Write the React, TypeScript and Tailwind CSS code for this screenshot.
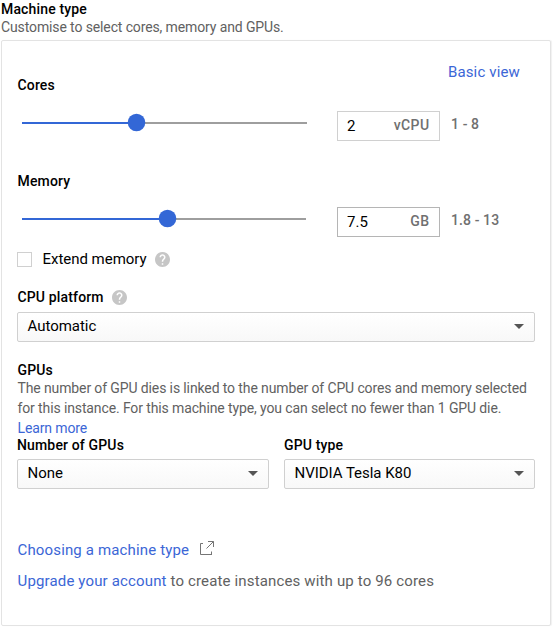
import type { ReactNode } from "react";

function Label({ children, className = "" }: { children: ReactNode; className?: string }) {
  return (
    <div className={`text-[14px] font-medium leading-5 tracking-[0.15px] whitespace-nowrap text-black ${className}`}>
      {children}
    </div>
  );
}

function Help() {
  return (
    <svg className="size-[15px] shrink-0" viewBox="2 2 20 20" fill="#c6c6c6">
      <path d="M12 2C6.48 2 2 6.48 2 12s4.48 10 10 10 10-4.48 10-10S17.52 2 12 2zm1 17h-2v-2h2v2zm2.07-7.75-.9.92C13.45 12.9 13 13.5 13 15h-2v-.5c0-1.1.45-2.1 1.17-2.83l1.24-1.26c.37-.36.59-.86.59-1.41 0-1.1-.9-2-2-2s-2 .9-2 2H8c0-2.21 1.79-4 4-4s4 1.79 4 4c0 .88-.36 1.68-.93 2.25z" />
    </svg>
  );
}

function Slider({ fill, width }: { fill: number; width: number }) {
  return (
    <div className="relative mt-[11px] ml-[5px] h-[2px] bg-[#9e9e9e]" style={{ width }}>
      <div className="h-full bg-[#3367d6]" style={{ width: fill }} />
      <svg className="absolute -top-[9px] size-5" style={{ left: fill - 10 }} viewBox="0 0 20 20" fill="#3367d6">
        <circle cx="10.5" cy="9.5" r="8.8" />
      </svg>
    </div>
  );
}

function Amount(props: { fill: number; width: number; value: string; unit: string; range: string; border: string }) {
  return (
    <div className="flex h-[30px]">
      <div className="w-[320px] shrink-0">
        <Slider fill={props.fill} width={props.width} />
      </div>
      <div className={`flex h-[30px] w-[103px] justify-between border pr-[9.5px] pl-[9px] ${props.border}`}>
        <span className="pt-[4px] text-[15px] leading-5 tracking-[0.1px] text-black">{props.value}</span>
        <span className="pt-[3px] text-[14px] font-medium leading-5 tracking-[0.4px] text-[#707070]">{props.unit}</span>
      </div>
      <span className="ml-[11px] pt-[3px] text-[14px] font-medium leading-5 tracking-[0.1px] text-[#707070]">
        {props.range}
      </span>
    </div>
  );
}

function Select({ value }: { value: string }) {
  return (
    <div className="flex h-[30px] items-center justify-between rounded-[2px] border border-[#d0d0d0] bg-linear-to-b from-white to-[#f8f8f8] pr-[10px] pl-[9.5px]">
      <span className="-mt-[2px] text-[15px] leading-5 tracking-[-0.03px] text-black">{value}</span>
      <svg className="-mt-px h-[5px] w-[10px]" viewBox="0 0 10 5" fill="#555">
        <path d="M0 0h10L5 5z" />
      </svg>
    </div>
  );
}

export default function App() {
  return (
    <div className="h-[633px] w-[553px] overflow-hidden bg-white font-['Roboto',sans-serif]">
      <div className="h-[40px] pl-px">
        <div className="-translate-y-px">
          <Label>Machine type</Label>
          <div className="-mt-[2px] text-[14px] leading-5 tracking-[-0.12px] text-[#616161]">
            Customise to select cores, memory and GPUs.
          </div>
        </div>
      </div>
      <div className="ml-px h-[586px] w-[550px] rounded-[2px] border border-[#e3e3e3] px-[15px] pt-[21px] shadow-[1px_0_1px_rgba(0,0,0,0.06)]">
        <div className="flex h-[33px] justify-between">
          <Label className="self-end pl-[0.5px]">Cores</Label>
          <a className="mr-[15px] text-[15px] leading-5 tracking-[0.15px] text-[#3b66d6]">Basic view</a>
        </div>
        <div className="mt-4">
          <Amount fill={114} width={285} value="2" unit="vCPU" range="1 - 8" border="border-[#d0d0d0]" />
        </div>
        <Label className="mt-[30px] pl-[0.5px]">Memory</Label>
        <div className="mt-4">
          <Amount fill={145} width={284} value="7.5" unit="GB" range="1.8 - 13" border="border-[#b5b5b5]" />
        </div>
        <div className="mt-3 flex h-5 items-center">
          <div className="size-[15px] border border-[#d0d0d0]" />
          <span className="ml-[10.5px] w-[112.5px] text-[15px] leading-5 tracking-[-0.03px] text-black">
            Extend memory
          </span>
          <Help />
        </div>
        <div className="mt-[18px] flex h-5 items-center">
          <Label className="w-[95px] pl-[0.5px]">CPU platform</Label>
          <Help />
        </div>
        <div className="mt-[5px]">
          <Select value="Automatic" />
        </div>
        <Label className="mt-[18px] h-[18px] pl-[0.5px]">GPUs</Label>
        <p className="pl-[0.5px] text-[14px] leading-5 tracking-[-0.12px] whitespace-nowrap text-[#616161]">
          The number of GPU dies is linked to the number of CPU cores and memory selected
          <br />
          for this instance. For this machine type, you can select no fewer than 1 GPU die.
          <br />
          <a className="text-[#3b66d6]">Learn more</a>
        </p>
        <div className="-mt-[3px] grid grid-cols-[252px_251px] gap-x-[15px]">
          <div>
            <Label className="mb-1">Number of GPUs</Label>
            <Select value="None" />
          </div>
          <div>
            <Label className="mb-1">GPU type</Label>
            <Select value="NVIDIA Tesla K80" />
          </div>
        </div>
        <div className="mt-[51px] flex h-5 pl-[0.5px] text-[15px] leading-5 tracking-[0.15px]">
          <a className="w-[182.5px] text-[#3b66d6]">Choosing a machine type</a>
          <svg className="mt-px size-[14px]" viewBox="0 0 14 14" fill="none" stroke="#757575">
            <path d="M3 2.500H.5v11H12M11.500 14v-3.500M8 .5h5.500V6M13.500.5 6.500 7.500" />
          </svg>
        </div>
        <div className="mt-[11px] pl-[0.5px] text-[15px] leading-5 tracking-[0.15px] whitespace-nowrap text-[#616161]">
          <a className="text-[#3b66d6]">Upgrade your account</a> to create instances with up to 96 cores
        </div>
      </div>
    </div>
  );
}
